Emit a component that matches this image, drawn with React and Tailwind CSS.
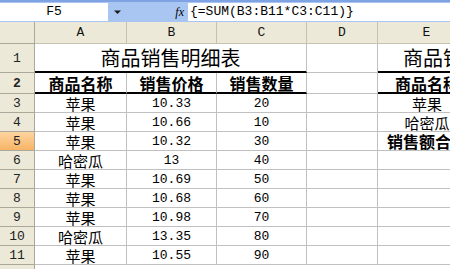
const mono = "font-['Liberation_Mono','DejaVu_Sans_Mono',monospace]";
const cjk = "font-['Noto_Sans_CJK_SC','Noto_Sans',sans-serif]";

const rows = [
  ["苹果", "10.33", "20"],
  ["苹果", "10.66", "10"],
  ["苹果", "10.32", "30"],
  ["哈密瓜", "13", "40"],
  ["苹果", "10.69", "50"],
  ["苹果", "10.68", "60"],
  ["苹果", "10.98", "70"],
  ["哈密瓜", "13.35", "80"],
  ["苹果", "10.55", "90"],
];

const sideE = { 3: "苹果", 4: "哈密瓜", 5: "销售额合计" };

function RowHead({ n, active }) {
  return (
    <div
      className={`w-[35px] shrink-0 flex items-center justify-center border-r border-b border-[#aca899] text-[13px] leading-none text-[#222] ${mono} ${
        active ? "bg-gradient-to-b from-[#fdd4a0] to-[#f7b466]" : "bg-[#ece9d8]"
      }`}
    >
      {n}
    </div>
  );
}

export default function App() {
  return (
    <div className="w-[450px] h-[269px] overflow-hidden bg-white">
      {/* formula bar */}
      <div className="h-[22px] bg-[#a9c6f2] border-t-2 border-[#7ea2e2] flex items-start pt-[1px]">
        <div className={`w-[108px] h-[18px] bg-white flex items-center justify-center text-[13px] text-black ${mono}`}>
          F5
        </div>
        <div className="w-[80px] h-[18px] flex items-center justify-between pl-[5px] pr-[4px]">
          <svg width="9" height="6" viewBox="0 0 9 6">
            <path d="M1 1.5h7L4.5 5z" fill="#1a1a1a" />
          </svg>
          <span className="italic text-[12px] text-black font-['Liberation_Serif',serif]">fx</span>
        </div>
        <div className={`flex-1 h-[18px] bg-white flex items-center pl-[2px] text-[13px] text-black whitespace-nowrap ${mono}`}>
          {"{=SUM(B3:B11*C3:C11)}"}
        </div>
      </div>

      {/* column header */}
      <div className={`flex h-[22px] bg-[#ece9d8] text-[13px] text-[#111] ${mono}`}>
        <div className="w-[35px] shrink-0 border-r border-b border-[#aca899]" />
        <div className="w-[92px] shrink-0 flex items-center justify-center border-r border-b border-[#c5c2b2]">A</div>
        <div className="w-[90px] shrink-0 flex items-center justify-center border-r border-b border-[#c5c2b2]">B</div>
        <div className="w-[90px] shrink-0 flex items-center justify-center border-r border-b border-[#c5c2b2]">C</div>
        <div className="w-[71px] shrink-0 flex items-center justify-center border-r border-b border-[#c5c2b2]">D</div>
        <div className="w-[98px] shrink-0 flex items-center justify-center border-r border-b border-[#c5c2b2]">E</div>
      </div>

      {/* row 1 */}
      <div className="flex h-[29px]">
        <RowHead n="1" />
        <div
          className={`w-[272px] shrink-0 flex items-center justify-center border-r border-[#c0c0c0] border-b-2 border-b-black text-[20px] leading-none text-black ${cjk}`}
        >
          商品销售明细表
        </div>
        <div className="w-[71px] shrink-0 border-r border-b border-[#c0c0c0]" />
        <div
          className={`flex-1 flex items-center pl-[25px] border-b-2 border-black text-[20px] leading-none text-black whitespace-nowrap overflow-hidden ${cjk}`}
        >
          商品销售明细表
        </div>
      </div>

      {/* row 2 */}
      <div className={`flex h-[21px] text-[16px] leading-none font-bold text-black ${cjk}`}>
        <RowHead n="2" />
        <div className="w-[92px] shrink-0 flex items-center justify-center border-r border-[#c0c0c0] border-b-2 border-b-black">
          商品名称
        </div>
        <div className="w-[90px] shrink-0 flex items-center justify-center border-r border-[#c0c0c0] border-b-2 border-b-black">
          销售价格
        </div>
        <div className="w-[90px] shrink-0 flex items-center justify-center border-r border-[#c0c0c0] border-b-2 border-b-black">
          销售数量
        </div>
        <div className="w-[71px] shrink-0 border-r border-b border-[#c0c0c0]" />
        <div className="w-[98px] shrink-0 flex items-center justify-center border-b-2 border-black whitespace-nowrap">
          商品名称
        </div>
      </div>

      {/* data rows */}
      {rows.map((r, i) => {
        const n = i + 3;
        return (
          <div key={n} className="flex h-[19px] text-black leading-none">
            <RowHead n={n} active={n === 5} />
            <div className={`w-[92px] shrink-0 flex items-center justify-center border-r border-b border-[#c0c0c0] text-[15px] ${cjk}`}>
              {r[0]}
            </div>
            <div className={`w-[90px] shrink-0 flex items-center justify-center border-r border-b border-[#c0c0c0] text-[13px] ${mono}`}>
              {r[1]}
            </div>
            <div className={`w-[90px] shrink-0 flex items-center justify-center border-r border-b border-[#c0c0c0] text-[13px] ${mono}`}>
              {r[2]}
            </div>
            <div className="w-[71px] shrink-0 border-r border-b border-[#c0c0c0]" />
            <div
              className={`w-[98px] shrink-0 flex items-center justify-center border-b border-[#c0c0c0] whitespace-nowrap ${cjk} ${
                n === 5 ? "font-bold text-[16px]" : "text-[15px]"
              }`}
            >
              {sideE[n] || ""}
            </div>
          </div>
        );
      })}
      <div className="flex h-[19px]">
        <RowHead n="12" />
      </div>
    </div>
  );
}
